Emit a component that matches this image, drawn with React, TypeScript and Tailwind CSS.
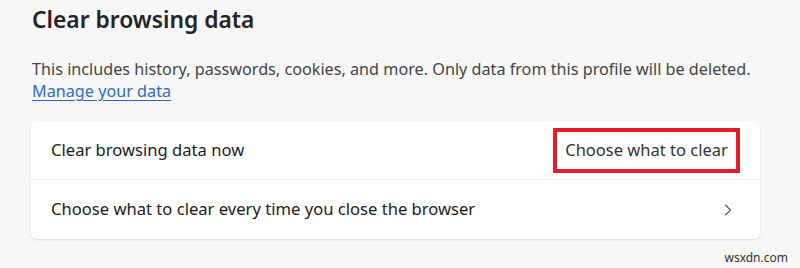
import { ChevronRight } from "lucide-react";

const font = { fontFamily: '"Noto Sans", "Open Sans", sans-serif' };

export default function App() {
  return (
    <div
      className="w-[800px] h-[268px] bg-[#f7f7f7] text-[#1b1b1b] overflow-hidden"
      style={font}
    >
      <div className="pl-[32px] pr-[30px] pt-[3px]">
        <h1 className="text-[22.8px] leading-[34px] font-semibold text-[#242424]">
          Clear browsing data
        </h1>

        <div className="mt-[21px] text-[16.2px] leading-[22px] text-[#444]">
          <p className="whitespace-nowrap">
            This includes history, passwords, cookies, and more. Only data from
            this profile will be deleted.
          </p>
          <a href="#" className="text-[#2e6bb8] underline underline-offset-[3px]">
            Manage your data
          </a>
        </div>
      </div>

      {/* settings card */}
      <div className="mt-[19px] ml-[31px] w-[729px] bg-white rounded-[6px] shadow-[0_1px_2px_rgba(0,0,0,0.12)]">
        <div className="h-[58px] flex items-center justify-between pl-[20px] pr-[20px]">
          <span className="text-[16.6px]">Clear browsing data now</span>
          <button className="h-[45px] w-[187px] border-[4px] border-[#e41e26] flex items-center justify-center text-[16.5px] text-[#333]">
            Choose what to clear
          </button>
        </div>
        <div className="h-px bg-[#ebebeb]" />
        <div className="h-[59px] flex items-center justify-between pl-[20px] pr-[22px]">
          <span className="text-[16.6px]">
            Choose what to clear every time you close the browser
          </span>
          <ChevronRight className="w-[20px] h-[20px] text-[#555]" strokeWidth={1.3} />
        </div>
      </div>

      <div className="mt-[10px] pr-[12px] text-right text-[12px] text-[#333]">
        wsxdn.com
      </div>
    </div>
  );
}
